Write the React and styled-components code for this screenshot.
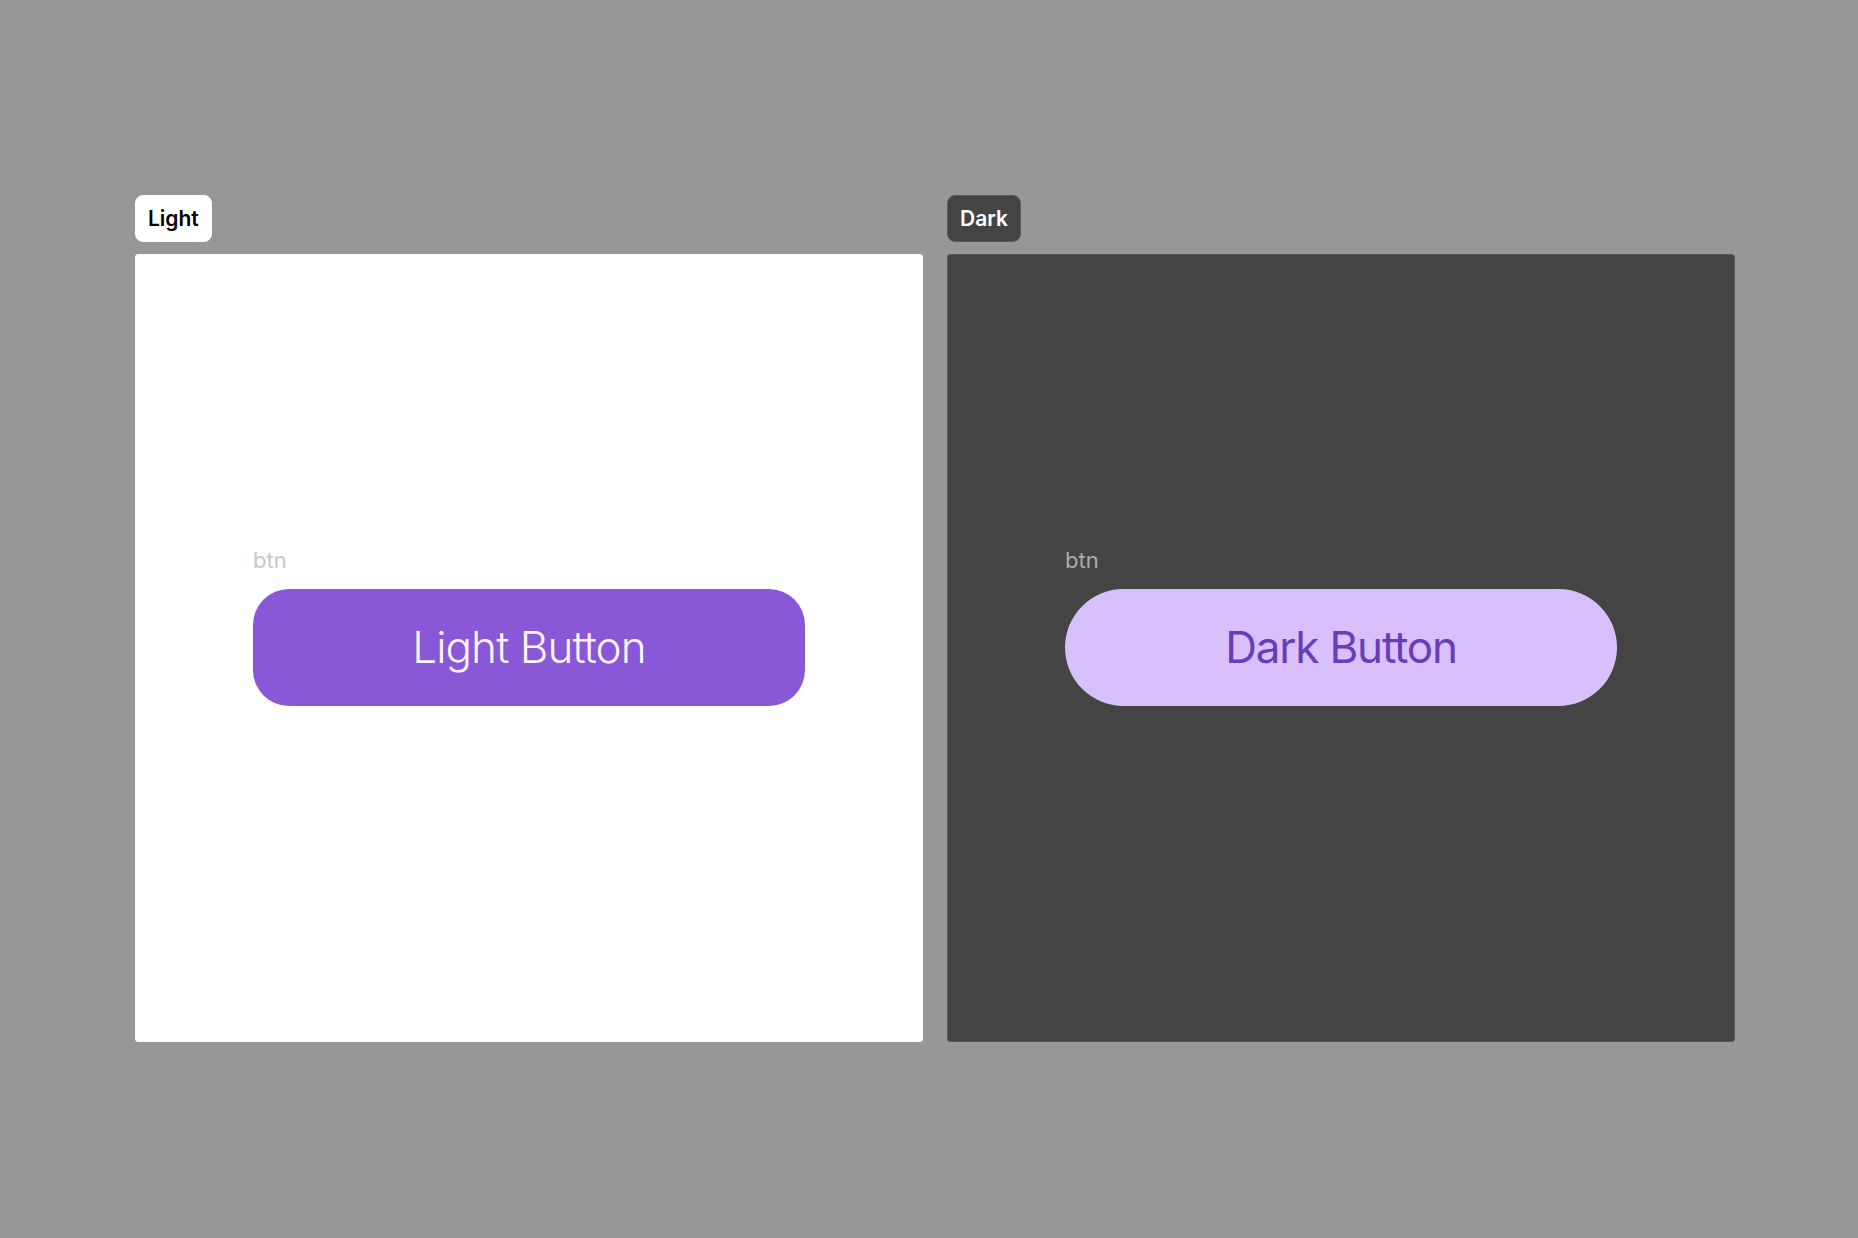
import React from "react";
import styled, { createGlobalStyle } from "styled-components";

const Global = createGlobalStyle`
  html, body { margin: 0; padding: 0; background: #979797; }
  body { font-family: Inter, "Noto Sans", sans-serif; }
`;

const Stage = styled.div`
  min-height: 100vh;
  display: flex;
  align-items: center;
  justify-content: center;
  padding: 0 0 2px 12px;
  box-sizing: border-box;
`;

const Row = styled.div`
  display: flex;
  gap: 24px;
`;

const Column = styled.section`
  display: flex;
  flex-direction: column;
  align-items: flex-start;
  gap: 12px;
`;

const Tag = styled.div`
  box-sizing: border-box;
  height: 47px;
  padding: 0 12px;
  display: flex;
  align-items: center;
  border-radius: 8px;
  font-size: 21px;
  font-weight: 600;
  background: ${(p) => (p.$dark ? "#444444" : "#ffffff")};
  color: ${(p) => (p.$dark ? "#ffffff" : "#000000")};
  border: 1px solid ${(p) => (p.$dark ? "#5a5a5a" : "#ffffff")};
`;

const Panel = styled.div`
  box-sizing: border-box;
  width: 788px;
  height: 788px;
  border-radius: 3px;
  background: ${(p) => (p.$dark ? "#444444" : "#ffffff")};
  border: 1px solid ${(p) => (p.$dark ? "#5a5a5a" : "#ffffff")};
  display: flex;
  flex-direction: column;
  align-items: center;
  justify-content: center;
  padding-bottom: 43px;
`;

const Group = styled.div`
  display: flex;
  flex-direction: column;
  gap: 16px;
`;

const Caption = styled.div`
  font-size: 22px;
  line-height: 26px;
  color: ${(p) => (p.$dark ? "#ababab" : "#c8c8c8")};
`;

const Button = styled.button`
  width: 552px;
  height: 117px;
  border: none;
  border-radius: ${(p) => (p.$dark ? "59px" : "36px")};
  background: ${(p) => (p.$dark ? "#d8c0fc" : "#8858d6")};
  color: ${(p) => (p.$dark ? "#6a3db8" : "#fbf3ff")};
  font-family: Inter, "Noto Sans", sans-serif;
  font-size: 44px;
  font-weight: ${(p) => (p.$dark ? 400 : 300)};
  letter-spacing: ${(p) => (p.$dark ? "-1.2px" : "-0.9px")};
  display: flex;
  align-items: center;
  justify-content: center;
  padding: 0;
`;

function Preview({ dark, title, label }) {
  return (
    <Column>
      <Tag $dark={dark}>{title}</Tag>
      <Panel $dark={dark}>
        <Group>
          <Caption $dark={dark}>btn</Caption>
          <Button $dark={dark}>{label}</Button>
        </Group>
      </Panel>
    </Column>
  );
}

export default function App() {
  return (
    <>
      <Global />
      <Stage>
        <Row>
          <Preview title="Light" label="Light Button" />
          <Preview dark title="Dark" label="Dark Button" />
        </Row>
      </Stage>
    </>
  );
}
